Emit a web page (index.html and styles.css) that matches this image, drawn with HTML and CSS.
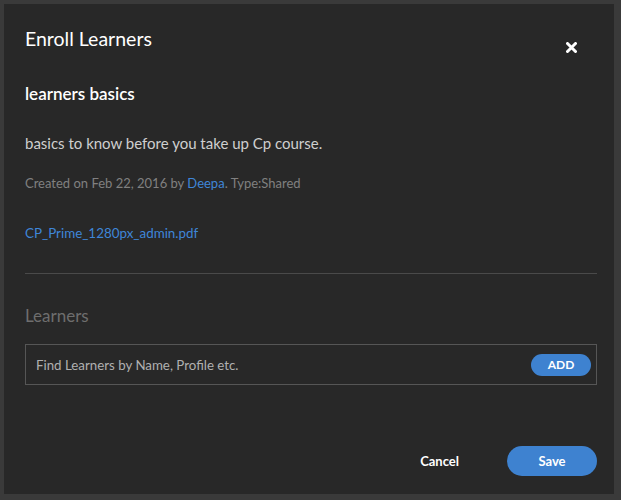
FILE: index.html
```html
<!DOCTYPE html>
<html>
<head>
<meta charset="utf-8">
<link rel="stylesheet" href="styles.css">
</head>
<body>
<div class="dialog">
  <div class="header">
    <h1 class="title">Enroll Learners</h1>
    <button class="close" aria-label="Close">
      <svg width="11" height="11" viewBox="0 0 11 11"><path d="M1.5 1.5 L9.5 9.5 M9.5 1.5 L1.5 9.5" stroke="#fff" stroke-width="3" stroke-linecap="round"/></svg>
    </button>
  </div>
  <h2 class="course">learners basics</h2>
  <p class="desc">basics to know before you take up Cp course.</p>
  <p class="meta">Created on Feb 22, 2016 by <a class="link">Deepa</a>. Type:Shared</p>
  <a class="link file">CP_Prime_1280px_admin.pdf</a>
  <hr class="divider">
  <h3 class="section">Learners</h3>
  <div class="search">
    <span class="placeholder">Find Learners by Name, Profile etc.</span>
    <button class="add">ADD</button>
  </div>
  <div class="footer">
    <button class="cancel">Cancel</button>
    <button class="save">Save</button>
  </div>
</div>
</body>
</html>
```
FILE: styles.css
```css
html, body {
  margin: 0;
  padding: 0;
  background: #3a3a3a;
  height: 500px;
  overflow: hidden;
}
body {
  padding: 4px 7px 0 4px;
  box-sizing: border-box;
  font-family: Lato, "Open Sans", sans-serif;
}
.dialog {
  background: #282828;
  height: 490px;
  box-sizing: border-box;
  padding: 0 17px 0 21px;
  display: flex;
  flex-direction: column;
}
.header {
  display: flex;
  justify-content: space-between;
  align-items: flex-start;
}
.title {
  margin: 23px 0 0;
  font-size: 19.5px;
  font-weight: 400;
  color: #fff;
  line-height: 24px;
}
.close {
  margin: 38px 20px 0 0;
  padding: 0;
  background: none;
  border: 0;
  width: 11px;
  height: 11px;
  display: flex;
}
.course {
  margin: 31px 0 0;
  font-size: 17px;
  font-weight: 600;
  color: #fff;
  line-height: 20px;
}
.desc {
  margin: 29px 0 0;
  font-size: 15px;
  color: #cfcfcf;
  line-height: 20px;
}
.meta {
  margin: 22px 0 0;
  font-size: 13px;
  color: #808080;
  line-height: 16px;
}
.link {
  color: #3f86d8;
  text-decoration: none;
}
.file {
  margin-top: 34px;
  font-size: 13.4px;
  line-height: 16px;
}
.divider {
  margin: 32px 0 0;
  border: 0;
  border-top: 1px solid #4a4a4a;
  height: 0;
}
.section {
  margin: 32px 0 0;
  font-size: 17px;
  font-weight: 400;
  color: #6e6e6e;
  line-height: 20px;
}
.search {
  margin-top: 18px;
  height: 41px;
  box-sizing: border-box;
  border: 1px solid #565656;
  display: flex;
  align-items: center;
  justify-content: space-between;
  padding: 0 5px 0 10px;
}
.placeholder {
  font-size: 13.3px;
  color: #b0b0b0;
}
.add {
  width: 60px;
  height: 22px;
  border-radius: 11px;
  border: 0;
  background: #3e82d0;
  color: #fff;
  font-family: inherit;
  font-size: 12px;
  font-weight: 700;
  padding: 0;
}
.footer {
  margin-top: auto;
  margin-bottom: 18px;
  display: flex;
  justify-content: flex-end;
  align-items: center;
  gap: 48px;
}
.cancel {
  background: none;
  border: 0;
  color: #fff;
  font-family: inherit;
  font-size: 13px;
  font-weight: 700;
  padding: 0;
}
.save {
  width: 90px;
  height: 30px;
  border-radius: 15px;
  border: 0;
  background: #3e82d0;
  color: #fff;
  font-family: inherit;
  font-size: 13px;
  font-weight: 700;
  padding: 0;
}
```
